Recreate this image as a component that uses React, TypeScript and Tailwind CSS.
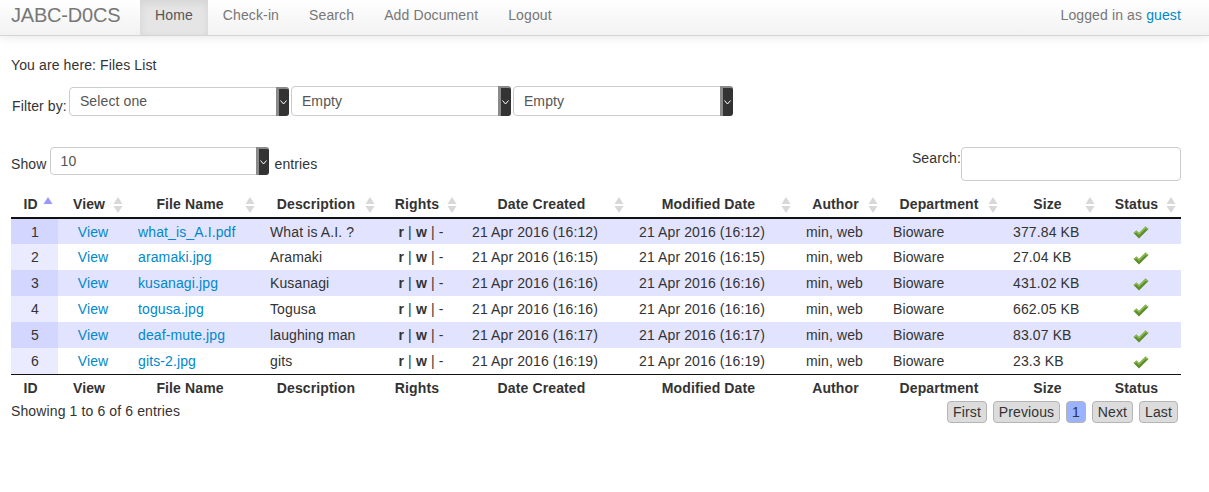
const files = [
  { id: 1, name: "what_is_A.I.pdf", desc: "What is A.I. ?", created: "21 Apr 2016 (16:12)", modified: "21 Apr 2016 (16:12)", size: "377.84 KB" },
  { id: 2, name: "aramaki.jpg", desc: "Aramaki", created: "21 Apr 2016 (16:15)", modified: "21 Apr 2016 (16:15)", size: "27.04 KB" },
  { id: 3, name: "kusanagi.jpg", desc: "Kusanagi", created: "21 Apr 2016 (16:16)", modified: "21 Apr 2016 (16:16)", size: "431.02 KB" },
  { id: 4, name: "togusa.jpg", desc: "Togusa", created: "21 Apr 2016 (16:16)", modified: "21 Apr 2016 (16:16)", size: "662.05 KB" },
  { id: 5, name: "deaf-mute.jpg", desc: "laughing man", created: "21 Apr 2016 (16:17)", modified: "21 Apr 2016 (16:17)", size: "83.07 KB" },
  { id: 6, name: "gits-2.jpg", desc: "gits", created: "21 Apr 2016 (16:19)", modified: "21 Apr 2016 (16:19)", size: "23.3 KB" },
];

const columns = [
  { label: "ID", width: "w-[47px]" },
  { label: "View", width: "w-[70px]" },
  { label: "File Name", width: "w-[132px]" },
  { label: "Description", width: "w-[120px]" },
  { label: "Rights", width: "w-[82px]" },
  { label: "Date Created", width: "w-[167px]" },
  { label: "Modified Date", width: "w-[167px]" },
  { label: "Author", width: "w-[87px]" },
  { label: "Department", width: "w-[120px]" },
  { label: "Size", width: "w-[97px]" },
  { label: "Status", width: "w-[81px]" },
];

const navItems = ["Home", "Check-in", "Search", "Add Document", "Logout"];

const pages = [
  { label: "First", width: "w-[40px]" },
  { label: "Previous", width: "w-[67px]" },
  { label: "1", width: "w-[20px]", current: true },
  { label: "Next", width: "w-[41px]" },
  { label: "Last", width: "w-[39px]" },
];

function SortIcon({ active }: { active?: boolean }) {
  if (active) {
    return (
      <svg className="absolute right-[5px] top-[7px]" width="10" height="8" viewBox="0 0 10 8">
        <path d="M5 0 L9.5 7 H0.5 Z" fill="#9999ff" />
      </svg>
    );
  }
  return (
    <svg className="absolute right-[5px] top-[7px]" width="10" height="16" viewBox="0 0 10 16">
      <path d="M5 0 L9.5 7 H0.5 Z" fill="#d8d8d8" />
      <path d="M5 16 L9.5 9 H0.5 Z" fill="#d8d8d8" />
    </svg>
  );
}

function Check() {
  return (
    <svg className="inline-block" width="16" height="13" viewBox="0 0 16 13">
      <path d="M0.5 7 L3.5 4.5 L6 7 L12.5 0.5 L15.5 3 L6 12.5 Z" fill="#5f8f2c" />
      <path d="M3.5 4.5 L6 7 L12.5 0.5 L15.5 3 L14 3.6 L12.6 2.8 L6 9 L3.4 6.4 L1.5 7.4 L0.5 7 Z" fill="#8cbb52" />
    </svg>
  );
}

function FakeSelect({ value, className }: { value: string; className: string }) {
  return (
    <div className={`relative border border-[#ccc] rounded-[4px] bg-white text-[#555] pl-[10px] ${className}`}>
      {value}
      <span className="absolute right-[-1px] top-[-1px] bottom-[-1px] w-[13px] bg-[#333] border-l-[3px] border-t-[2px] border-[#8a8a8a] rounded-r-[3px] flex items-center justify-center">
        <svg width="7" height="5" viewBox="0 0 7 5">
          <path d="M0.5 0.5 L3.5 4 L6.5 0.5" stroke="#fff" strokeWidth="1" fill="none" />
        </svg>
      </span>
    </div>
  );
}

export default function App() {
  return (
    <div className="min-h-[492px] bg-white text-[14px] leading-[20px] tracking-[0.12px] text-[#333] font-['Liberation_Sans',sans-serif]">
      <nav className="h-[36px] flex items-stretch bg-gradient-to-b from-white to-[#f2f2f2] border-b border-[#d4d4d4] shadow-[0_1px_10px_rgba(0,0,0,0.1)] text-[#777]">
        <span className="text-[20px] tracking-[-0.2px] w-[140px] pl-[11px] leading-[31px]">JABC-D0CS</span>
        {navItems.map((item) => (
          <span
            key={item}
            className={`px-[15px] leading-[30px] ${
              item === "Home" ? "bg-[#e5e5e5] text-[#555] shadow-[inset_0_3px_8px_rgba(0,0,0,0.08)]" : ""
            }`}
          >
            {item}
          </span>
        ))}
        <span className="ml-auto pr-[28px] leading-[30px]">
          Logged in as <a className="text-[#0088cc]">guest</a>
        </span>
      </nav>

      <main className="px-[11px]">
        <p className="pt-[19px]">You are here: Files List</p>

        <div className="flex items-start mt-[11px] gap-[2px]">
          <span className="ml-[1px] mt-[10px]">Filter by:</span>
          <FakeSelect value="Select one" className="w-[220px] h-[29px] mt-[1px] leading-[26px]" />
          <FakeSelect value="Empty" className="w-[220px] h-[30px] leading-[28px]" />
          <FakeSelect value="Empty" className="w-[220px] h-[30px] leading-[28px]" />
        </div>

        <div className="flex justify-between items-start mt-[31px] w-[1170px]">
          <div className="flex items-center">
            <span className="mt-[6px] mr-[3px]">Show</span>
            <FakeSelect value="10" className="w-[219px] h-[28px] leading-[26px]" />
            <span className="ml-[6px] mt-[6px]">entries</span>
          </div>
          <label className="flex items-start">
            <span className="mt-[1px]">Search:</span>
            <div className="w-[220px] h-[34px] border border-[#ccc] rounded-[4px] bg-white" />
          </label>
        </div>

        <table className="table-fixed border-collapse w-[1170px] mt-[9px]">
          <thead>
            <tr className="border-b-2 border-[#111] h-[28px]">
              {columns.map((col, i) => (
                <th key={col.label} className={`relative pl-[10px] pr-[18px] text-center font-bold ${col.width}`}>
                  {col.label}
                  <SortIcon active={i === 0} />
                </th>
              ))}
            </tr>
          </thead>
          <tbody>
            {files.map((f, i) => {
              const odd = i % 2 === 0;
              return (
                <tr key={f.id} className={`h-[26px] ${odd ? "bg-[#e2e4ff]" : "bg-white"}`}>
                  <td className={`text-center pl-[1px] ${odd ? "bg-[#d3d6ff]" : "bg-[#eaebff]"}`}>{f.id}</td>
                  <td className="text-center">
                    <a className="text-[#0088cc]">View</a>
                  </td>
                  <td className="pl-[10px]">
                    <a className="text-[#0088cc]">{f.name}</a>
                  </td>
                  <td className="pl-[10px]">{f.desc}</td>
                  <td className="px-[10px] text-center">
                    <b>r</b> | <b>w</b> | -
                  </td>
                  <td className="pl-[10px]">{f.created}</td>
                  <td className="pl-[10px]">{f.modified}</td>
                  <td className="pl-[10px]">min, web</td>
                  <td className="pl-[10px]">Bioware</td>
                  <td className="pl-[10px]">{f.size}</td>
                  <td className="text-center">
                    <Check />
                  </td>
                </tr>
              );
            })}
          </tbody>
          <tfoot>
            <tr className="border-t border-[#111] h-[27px]">
              {columns.map((col) => (
                <th key={col.label} className="pl-[10px] pr-[18px] text-center font-bold">
                  {col.label}
                </th>
              ))}
            </tr>
          </tfoot>
        </table>

        <div className="flex justify-between items-start w-[1170px]">
          <span>Showing 1 to 6 of 6 entries</span>
          <div className="flex gap-[6px] mr-[3px]">
            {pages.map((p) => (
              <span
                key={p.label}
                className={`border border-[#b4b4b4] rounded-[4px] h-[22px] leading-[20px] text-center ${p.width} ${
                  p.current ? "bg-[#99b3ff]" : "bg-[#dcdcdc]"
                }`}
              >
                {p.label}
              </span>
            ))}
          </div>
        </div>
      </main>
    </div>
  );
}
